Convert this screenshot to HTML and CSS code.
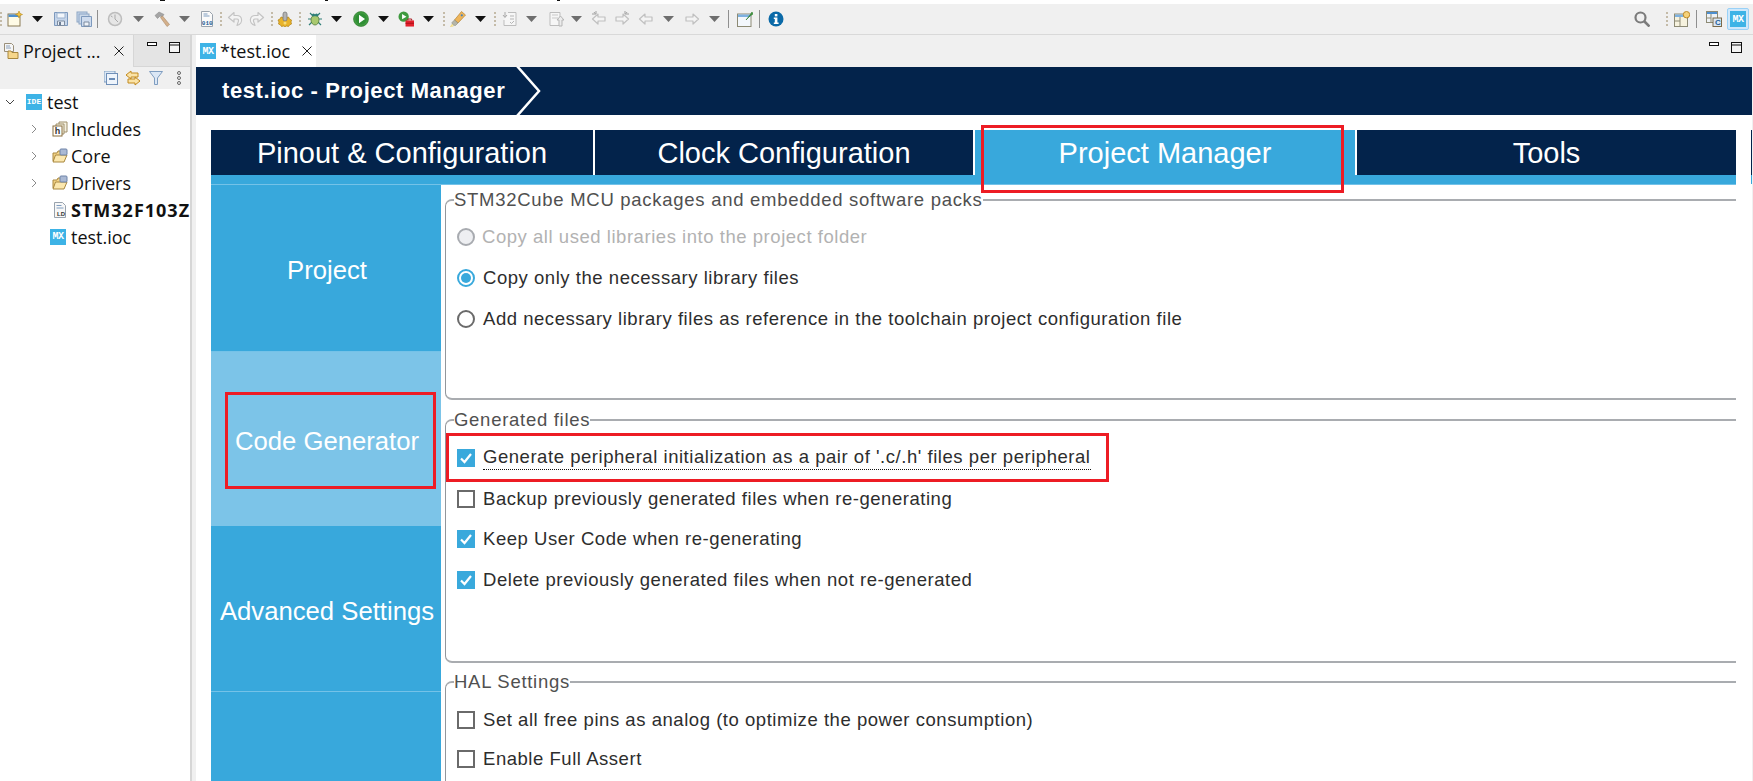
FILE: index.html
```html
<!DOCTYPE html>
<html lang="en">
<head>
<meta charset="utf-8">
<title>test.ioc - Project Manager</title>
<link rel="stylesheet" href="styles.css">
</head>
<body>
<svg class="defs" width="0" height="0" aria-hidden="true">
  <symbol id="close" viewBox="0 0 10 10"><path d="M.5.5l9 9M9.5.5l-9 9" stroke="#222" stroke-width="1" fill="none"/></symbol>
  <symbol id="min" viewBox="0 0 10 4"><rect x=".5" y=".5" width="9" height="3" fill="#fff" stroke="#111"/></symbol>
  <symbol id="max" viewBox="0 0 11 11"><rect x=".5" y=".5" width="10" height="10" fill="#f4f4f4" stroke="#111"/><path d="M0 3h11" stroke="#111"/></symbol>
  <symbol id="dots" viewBox="0 0 2 16"><path d="M0 1h2v2H0zM0 5h2v2H0zM0 9h2v2H0zM0 13h2v2H0z" fill="#c4bba8"/></symbol>
  <symbol id="floppy" viewBox="0 0 16 16"><path d="M1.5 1.5h13v13h-13z" fill="#c5d5ea" stroke="#7d99bd"/><path d="M4 2h8v5H4z" fill="#f2f6fb" stroke="#9db3cf"/><path d="M4.500 10h7v4.500h-7z" fill="#e8eef6" stroke="#7d8ca0"/><path d="M6 11h2v3H6z" fill="#6d7f96"/></symbol>
  <symbol id="fold" viewBox="0 0 16 16"><path d="M1 13V5h4l1-2h4l1 2h3v2" fill="#f4d488" stroke="#a8873e"/><path d="M1 14l2.500-7H15l-3 7z" fill="#fbe7ae" stroke="#a8873e"/><rect x="8" y="1" width="7" height="6" rx="1" fill="#aab9d4" stroke="#6f84a8"/></symbol>
  <symbol id="outl" viewBox="0 0 16 16"><path d="M7 3L1.500 8 7 13v-3h7V6H7z" fill="#f4f4f4" stroke="#c0c0c0" stroke-width="1.200" stroke-linejoin="round"/></symbol>
  <symbol id="outr" viewBox="0 0 16 16"><path d="M9 3l5.500 5L9 13v-3H2V6h7z" fill="#f4f4f4" stroke="#c0c0c0" stroke-width="1.200" stroke-linejoin="round"/></symbol>
  <symbol id="hook" viewBox="0 0 16 16"><path d="M7 1.500L1.500 6.500 7 11V8h3c1.500 0 2 1.500 1 3.500l-1 3c3.500-1 5-4 4.500-6.500C14 5.500 12 4.500 10 4.500H7z" fill="#f4f4f4" stroke="#c4c4c4" stroke-width="1.200" stroke-linejoin="round"/></symbol>
  <symbol id="tick" viewBox="0 0 18 18"><path d="M4 9.500l3.500 3.500L14 5" fill="none" stroke="#fff" stroke-width="2.200"/></symbol>
</svg>

<div class="top-strip"><i class="frag frag-a"></i><i class="frag frag-b"></i><i class="frag frag-c"></i></div>

<header class="toolbar">
  <div class="tb-left">
    <svg class="dots" viewBox="0 0 2 16"><use href="#dots"/></svg>
    <svg class="ico m5" viewBox="0 0 16 16"><rect x="1" y="3" width="12" height="12" fill="#fffbe6" stroke="#8a7a55"/><rect x="1.500" y="3.500" width="11" height="2.500" fill="#4d8fd0"/><path d="M12 0l1 2.500 2.500 1-2.500 1-1 2.500-1-2.500L8.500 3.500 11 2.500z" fill="#f4c542" stroke="#b98a1a" stroke-width=".6"/></svg>
    <i class="arrow m9"></i>
    <svg class="ico m10" viewBox="0 0 16 16"><use href="#floppy"/></svg>
    <svg class="ico m7" viewBox="0 0 16 16"><g opacity=".85"><rect x="1" y="1" width="10" height="10" fill="#c5d5ea" stroke="#7d99bd"/><rect x="3" y="3" width="10" height="10" fill="#c5d5ea" stroke="#7d99bd"/></g><path d="M5.500 5.500h10v10h-10z" fill="#cfdcee" stroke="#7d99bd"/><path d="M8 11h5v4H8z" fill="#eef2f8" stroke="#7d8ca0"/></svg>
    <i class="vsep m5"></i>
    <svg class="ico m9" viewBox="0 0 16 16"><circle cx="8" cy="8" r="6.500" fill="#e6e6e6" stroke="#bdbdbd" stroke-width="1.500"/><path d="M8 3.500V8l3 3M4 5l1.500 1" stroke="#a9a9a9" fill="none"/></svg>
    <i class="arrow dim m10"></i>
    <svg class="ico m10" viewBox="0 0 16 16"><path d="M1 4.500L5 1l5 2.500-2 2.500-2-1-2.500 2.500z" fill="#a5a5a5" stroke="#8d8d8d" stroke-width=".6"/><path d="M6.500 6.500L8.500 5l7 8.500-2.500 2z" fill="#d4b08a" stroke="#a98a6a" stroke-width=".6"/></svg>
    <i class="arrow dim m9"></i>
    <svg class="ico m9" viewBox="0 0 16 16"><path d="M2.500.5h8l3 3v12h-11z" fill="#fafafa" stroke="#9aa3ad"/><path d="M4.500 3h4M4.500 5h6" stroke="#7f9dc0"/><text class="bin" x="2.800" y="13.500">010</text></svg>
    <svg class="dots m5" viewBox="0 0 2 16"><use href="#dots"/></svg>
    <svg class="ico m5" viewBox="0 0 16 16"><use href="#hook"/></svg>
    <svg class="ico m6 flip" viewBox="0 0 16 16"><use href="#hook"/></svg>
    <svg class="dots m6" viewBox="0 0 2 16"><use href="#dots"/></svg>
    <svg class="ico m4" viewBox="0 0 16 16"><path d="M8 5l1.500 1.500 2-.5 1 2 2 1-.5 2 .5 2-2 1-1 1.500-2-.5-1.500 1-1.500-1-2 .5-1-1.500-2-1 .5-2L1 9l2-1 1-2 2 .5z" fill="#e8b32a" stroke="#b07f12" stroke-width=".7"/><rect x="6" y="1" width="4" height="9" rx="2" fill="#b3b3b3" stroke="#7a7a7a" stroke-width=".8"/><circle cx="8" cy="12" r="1.500" fill="#f7dc7a"/></svg>
    <svg class="dots m6" viewBox="0 0 2 16"><use href="#dots"/></svg>
    <svg class="ico m6" viewBox="0 0 16 16"><path d="M3 2l3 3M13 2l-3 3M1 8h3M15 8h-3M2 14l3-3M14 14l-3-3" stroke="#2f7f78" stroke-width="1.200"/><ellipse cx="8" cy="9" rx="4" ry="5" fill="#a9c96f" stroke="#4f7a3a" stroke-width=".8"/><circle cx="6.500" cy="4" r="1.600" fill="#2f7f78"/><circle cx="9.500" cy="4" r="1.600" fill="#2f7f78"/></svg>
    <i class="arrow m8"></i>
    <svg class="ico m11" viewBox="0 0 16 16"><circle cx="8" cy="8" r="7.500" fill="#3f9a3f" stroke="#2b7a2b" stroke-width=".6"/><circle cx="8" cy="8" r="5.500" fill="#2f8f35"/><path d="M6 3.800L12 8l-6 4.200z" fill="#fff"/></svg>
    <i class="arrow m9"></i>
    <svg class="ico m9" viewBox="0 0 17 17"><circle cx="6" cy="6" r="5.500" fill="#3f9a3f"/><path d="M4.300 3.200L9 6l-4.700 2.800z" fill="#fff"/><rect x="8" y="10" width="9" height="6.500" fill="#e2202c"/><path d="M10.500 10V8.500h4V10M8 13h9" stroke="#a51018" fill="none"/></svg>
    <i class="arrow m9"></i>
    <svg class="dots m9" viewBox="0 0 2 16"><use href="#dots"/></svg>
    <svg class="ico m5" viewBox="0 0 16 16"><path d="M11.500.5l4 3.500-7.500 8L4.500 9z" fill="#eeb55a" stroke="#b58433" stroke-width=".7"/><path d="M4.500 9L8 12l-2.500 2.500-3-.5-.5-2.500z" fill="#b5b5a8" stroke="#8a8a7a" stroke-width=".6"/><path d="M2.500 13l-2 2.500 3-.5" fill="#fff3b0" stroke="#e8cb60" stroke-width=".6"/><circle cx="11.800" cy="4.300" r="1.100" fill="#3d83c7"/></svg>
    <i class="arrow m9"></i>
    <svg class="dots m8" viewBox="0 0 2 16"><use href="#dots"/></svg>
    <svg class="ico m6" viewBox="0 0 16 16"><path d="M6 1.500h8v13H2V9" fill="#f6f6f6" stroke="#bdbdbd"/><path d="M3 1v5M1 4l2 2.500L5 4" stroke="#a8a8a8" fill="none"/><path d="M8 5h4M8 8h4M8 11l1.500 1.500L12 10" stroke="#b5b5b5" fill="none"/></svg>
    <i class="arrow dim m8"></i>
    <svg class="ico m11" viewBox="0 0 16 16"><path d="M2 1.500h10v13H2z" fill="#f6f6f6" stroke="#bdbdbd"/><path d="M4 4h6M4 7h6" stroke="#c9c9c9"/><path d="M11 15V9H9l3.500-4L16 9h-2v6z" fill="#ececec" stroke="#b5b5b5"/></svg>
    <i class="arrow dim m7"></i>
    <svg class="ico m9" viewBox="0 0 16 16"><use href="#outl"/><path d="M3 1l1 1.500M5 0v3M1 3h4" stroke="#9f9f9f"/></svg>
    <svg class="ico m7" viewBox="0 0 16 16"><use href="#outr"/><path d="M13 1l-1 1.500M11 0v3M15 3h-4" stroke="#9f9f9f"/></svg>
    <svg class="ico m8" viewBox="0 0 16 16"><use href="#outl"/></svg>
    <i class="arrow dim m9"></i>
    <svg class="ico m10" viewBox="0 0 16 16"><use href="#outr"/></svg>
    <i class="arrow dim m9"></i>
    <i class="vsep m8"></i>
    <svg class="ico m8" viewBox="0 0 16 16"><rect x=".5" y="3" width="13.500" height="12.500" fill="#f3f7fc" stroke="#8d8a74"/><rect x="1" y="3.500" width="12.500" height="2.500" fill="#7eb1e0"/><path d="M9 9l4-5 2-3 1 2-3 2z" fill="#3f9a3f" stroke="#2b7a2b" stroke-width=".6"/></svg>
    <i class="vsep m6"></i>
    <svg class="ico m8" viewBox="0 0 16 16"><circle cx="8" cy="8" r="7.500" fill="#0b6aa8"/><rect x="6.800" y="3" width="2.600" height="2.400" fill="#fff"/><path d="M5.800 6.500h3.600v5h1.200v1.500H5.800v-1.500h1v-3.500h-1z" fill="#fff"/></svg>
  </div>
  <div class="tb-right">
    <svg class="ico" viewBox="0 0 16 16"><circle cx="6.500" cy="6.500" r="5" fill="none" stroke="#7b7b7b" stroke-width="2.200"/><path d="M10 10l5.500 5.500" stroke="#7b7b7b" stroke-width="2.600"/></svg>
    <svg class="dots m16" viewBox="0 0 2 16"><use href="#dots"/></svg>
    <svg class="ico m6" viewBox="0 0 16 16"><rect x=".5" y="3" width="13" height="12.500" fill="#f6f2de" stroke="#8d8a74"/><rect x="1" y="3.500" width="12" height="2.500" fill="#7eb1e0"/><path d="M6 6v9M1 10h5" stroke="#8d8a74"/><path d="M12.500 .5a3.200 3.200 0 110 6.400 3.200 3.200 0 010-6.400z" fill="#f6d27a" stroke="#bd8a2a"/></svg>
    <i class="vsep m6"></i>
    <svg class="ico m9" viewBox="0 0 16 16"><rect x=".5" y=".5" width="11" height="11" fill="#eef2f6" stroke="#8d8a74"/><rect x="1" y="1" width="10" height="2" fill="#4d8fd0"/><path d="M5 3v8M1 7h4" stroke="#8d8a74"/><rect x="7" y="7" width="8.500" height="8.500" fill="#d8e6f4" stroke="#7a6a4a"/><text class="cletter" x="9" y="14">C</text></svg>
    <span class="mx-active m5"><span class="badge badge-mx">MX</span></span>
  </div>
</header>

<main class="workspace">
  <aside class="explorer">
    <div class="view-tabs">
      <div class="view-tab">
        <svg class="ico" viewBox="0 0 16 16"><path d="M1.500.5h7l2 2v6h-9z" fill="#f6f6f6" stroke="#9a8f7a"/><path d="M3 3h4M3 5h5" stroke="#8aa0bb"/><path d="M5 15.500V8h3l1 1.500h6v6z" fill="#f6d68a" stroke="#a8873e"/></svg>
        <span class="view-title">Project ...</span>
        <svg class="x" viewBox="0 0 10 10"><use href="#close"/></svg>
      </div>
      <div class="view-ctl">
        <svg class="min" viewBox="0 0 10 4"><use href="#min"/></svg>
        <svg class="max" viewBox="0 0 11 11"><use href="#max"/></svg>
      </div>
    </div>
    <div class="view-bar">
      <svg class="ico-s" viewBox="0 0 14 14"><rect x="0" y="0" width="11" height="11" fill="#dce8f5" stroke="#7f9dc0"/><rect x="2.500" y="2.500" width="11" height="11" fill="#eef4fb" stroke="#6f8fb8"/><path d="M5 8h6" stroke="#3e6aa0" stroke-width="1.500"/></svg>
      <svg class="ico m7" viewBox="0 0 16 16"><path d="M6 1L1 5l5 4V7h7V3H6zM10 7l5 4-5 4v-2H3V9h7z" fill="#fbe3a6" stroke="#c28a1f" stroke-linejoin="round"/></svg>
      <svg class="ico-s m8" viewBox="0 0 14 14"><path d="M.5.500h13L8.500 7v6.500h-3V7z" fill="#dbe7f5" stroke="#7f9dc0"/></svg>
      <svg class="kebab m14" viewBox="0 0 4 14"><circle cx="2" cy="2" r="1.500" fill="none" stroke="#666"/><circle cx="2" cy="7" r="1.500" fill="none" stroke="#666"/><circle cx="2" cy="12" r="1.500" fill="none" stroke="#666"/></svg>
    </div>
    <ul class="tree">
      <li class="tree-row"><svg class="tw root" viewBox="0 0 10 6"><path d="M1 1l4 4 4-4" fill="none" stroke="#444"/></svg><span class="badge badge-ide">IDE</span><span class="tree-text">test</span></li>
      <li class="tree-row child"><svg class="tw" viewBox="0 0 6 10"><path d="M1 1l4 4-4 4" fill="none" stroke="#8a8a8a"/></svg><svg class="ico" viewBox="0 0 16 16"><path d="M7 1h8v10H7z" fill="#f5f0e0" stroke="#9f8f6a"/><path d="M4 3h8v10H4z" fill="#f5f0e0" stroke="#9f8f6a"/><rect x="1" y="5" width="9" height="10" fill="#fff" stroke="#8a6f3e"/><text class="hletter" x="2.800" y="13">h</text></svg><span class="tree-text">Includes</span></li>
      <li class="tree-row child"><svg class="tw" viewBox="0 0 6 10"><path d="M1 1l4 4-4 4" fill="none" stroke="#8a8a8a"/></svg><svg class="ico" viewBox="0 0 16 16"><use href="#fold"/></svg><span class="tree-text">Core</span></li>
      <li class="tree-row child"><svg class="tw" viewBox="0 0 6 10"><path d="M1 1l4 4-4 4" fill="none" stroke="#8a8a8a"/></svg><svg class="ico" viewBox="0 0 16 16"><use href="#fold"/></svg><span class="tree-text">Drivers</span></li>
      <li class="tree-row leaf"><svg class="ico" viewBox="0 0 16 16"><path d="M2.500.5h8l3 3v12h-11z" fill="#f7f7f7" stroke="#98a2ad"/><path d="M4.500 3.500h5M4.500 6h7" stroke="#7f9dc0"/><text class="ldletter" x="5" y="14">LD</text></svg><span class="tree-text strong">STM32F103Z</span></li>
      <li class="tree-row leaf-mx"><span class="badge badge-mx">MX</span><span class="tree-text">test.ioc</span></li>
    </ul>
  </aside>

  <section class="editor">
    <div class="editor-tabs">
      <div class="editor-tab"><span class="badge badge-mx">MX</span><span class="editor-title">*test.ioc</span><svg class="x" viewBox="0 0 10 10"><use href="#close"/></svg></div>
      <div class="editor-ctl">
        <svg class="min" viewBox="0 0 10 4"><use href="#min"/></svg>
        <svg class="max" viewBox="0 0 11 11"><use href="#max"/></svg>
      </div>
    </div>
    <div class="crumb">
      <span class="crumb-text">test.ioc - Project Manager</span>
      <svg class="chevron" viewBox="0 0 26 48"><path d="M1-1l22 25L1 49" fill="none" stroke="#fff" stroke-width="2.500"/></svg>
    </div>
    <div class="body">
      <nav class="main-tabs">
        <div class="main-tab">Pinout &amp; Configuration</div>
        <div class="main-tab">Clock Configuration</div>
        <div class="main-tab active">Project Manager<i class="mark mark-tab"></i></div>
        <div class="main-tab">Tools</div>
      </nav>
      <div class="strip"></div>
      <div class="split">
        <div class="side">
          <div class="side-item">Project</div>
          <div class="side-item active">Code Generator<i class="mark mark-side"></i></div>
          <div class="side-item">Advanced Settings</div>
          <div class="side-item"></div>
        </div>
        <div class="panels">
          <fieldset class="group group-pack">
            <legend>STM32Cube MCU packages and embedded software packs</legend>
            <div class="opt disabled"><i class="radio"></i><span>Copy all used libraries into the project folder</span></div>
            <div class="opt"><i class="radio on"></i><span>Copy only the necessary library files</span></div>
            <div class="opt"><i class="radio"></i><span>Add necessary library files as reference in the toolchain project configuration file</span></div>
          </fieldset>
          <fieldset class="group group-gen">
            <legend>Generated files</legend>
            <div class="opt marked"><i class="check on"><svg viewBox="0 0 18 18"><use href="#tick"/></svg></i><span class="dotted">Generate peripheral initialization as a pair of '.c/.h' files per peripheral</span><i class="mark mark-opt"></i></div>
            <div class="opt"><i class="check"></i><span>Backup previously generated files when re-generating</span></div>
            <div class="opt"><i class="check on"><svg viewBox="0 0 18 18"><use href="#tick"/></svg></i><span>Keep User Code when re-generating</span></div>
            <div class="opt"><i class="check on"><svg viewBox="0 0 18 18"><use href="#tick"/></svg></i><span>Delete previously generated files when not re-generated</span></div>
          </fieldset>
          <fieldset class="group group-hal">
            <legend>HAL Settings</legend>
            <div class="opt"><i class="check"></i><span>Set all free pins as analog (to optimize the power consumption)</span></div>
            <div class="opt"><i class="check"></i><span>Enable Full Assert</span></div>
          </fieldset>
        </div>
      </div>
      <i class="sliver"></i>
    </div>
  </section>
</main>
</body>
</html>
```

FILE: styles.css
```css
* { box-sizing: border-box; }
html, body { margin: 0; height: 100%; overflow: hidden; }
body {
  display: flex;
  flex-direction: column;
  background: #f0f0f0;
  font-family: "Liberation Sans", Arial, sans-serif;
  color: #2d2d2d;
}
.defs { position: absolute; }
i { display: block; font-style: normal; }
ul { list-style: none; margin: 0; padding: 0; }

.top-strip { height: 4px; background: #fff; display: flex; align-items: flex-start; flex: none; }
.frag { height: 1px; background: #111; }
.frag-a { width: 5px; margin-left: 160px; }
.frag-b { width: 3px; margin-left: 160px; }
.frag-c { width: 3px; margin-left: 229px; }

.toolbar {
  height: 31px;
  flex: none;
  display: flex;
  justify-content: space-between;
  align-items: center;
  border-bottom: 1px solid #d9d9d9;
  padding-right: 4px;
  background: #f0f0f0;
}
.tb-left, .tb-right { display: flex; align-items: center; }
.ico { width: 16px; height: 16px; flex: none; display: block; }
.ico.flip { transform: scaleX(-1); }
.ico-s { width: 14px; height: 14px; flex: none; display: block; }
.dots { width: 2px; height: 16px; flex: none; display: block; }
.arrow { width: 11px; height: 6px; flex: none; background: #111; clip-path: polygon(0 0, 100% 0, 50% 100%); }
.arrow.dim { background: #6e6e6e; }
.vsep { width: 1px; height: 18px; background: #8f8f8f; flex: none; }
.kebab { width: 4px; height: 14px; flex: none; }
.bin { font: 700 6px "Liberation Mono", monospace; fill: #1f5e96; }
.cletter { font: 700 8px "Liberation Sans", sans-serif; fill: #1f5e96; }
.hletter { font: 700 9px "Liberation Sans", sans-serif; fill: #333; }
.ldletter { font: 700 6px "Liberation Sans", sans-serif; fill: #333; }

.m4 { margin-left: 4px; } .m5 { margin-left: 5px; } .m6 { margin-left: 6px; }
.m7 { margin-left: 7px; } .m8 { margin-left: 8px; } .m9 { margin-left: 9px; }
.m10 { margin-left: 10px; } .m11 { margin-left: 11px; } .m14 { margin-left: 14px; }
.m16 { margin-left: 16px; }

.badge {
  width: 16px; height: 16px; flex: none;
  display: flex; align-items: center; justify-content: center;
  background: #3db3e6; color: #fff;
  font: 700 10px "Liberation Mono", monospace;
  letter-spacing: -.5px;
}
.badge-ide { font-size: 8px; letter-spacing: 0; }
.mx-active {
  width: 22px; height: 22px; display: flex; align-items: center; justify-content: center;
  background: #cfe8fb; border: 1px solid #99d1f7; border-radius: 2px;
}

.workspace { flex: 1; min-height: 0; display: flex; }

.explorer {
  width: 192px; flex: none; display: flex; flex-direction: column;
  border-right: 2px solid #d6d6d6;
  margin-right: 4px;
  background: #fff;
  font-family: "Open Sans", "Noto Sans", sans-serif;
  color: #111;
}
.view-tabs { height: 32px; flex: none; display: flex; background: #f0f0f0; }
.view-tab { width: 133px; display: flex; align-items: center; padding-left: 3px; }
.view-title { font-size: 18px; margin-left: 4px; width: 91px; white-space: nowrap; }
.x { width: 10px; height: 10px; flex: none; display: block; }
.view-ctl { flex: 1; background: #e4e4e4; border-left: 1px solid #d6d6d6; border-bottom: 1px solid #d6d6d6; padding: 7px 10px 0 13px; display: flex; justify-content: space-between; align-items: flex-start; }
.min { width: 10px; height: 4px; display: block; }
.max { width: 11px; height: 11px; display: block; }
.view-bar { height: 22px; flex: none; display: flex; align-items: center; padding-left: 104px; background: #f0f0f0; }

.tree { flex: 1; overflow: hidden; }
.tree-row { height: 27px; padding-bottom: 2px; display: flex; align-items: center; white-space: nowrap; font-size: 18px; }
.tw { flex: none; display: block; }
.tw.root { width: 10px; height: 6px; margin: 0 11px 0 5px; }
.tree-row.child { padding-left: 31px; }
.tree-row.child .tw { width: 6px; height: 10px; margin-right: 15px; }
.tree-row.leaf { padding-left: 52px; }
.tree-row.leaf-mx { padding-left: 50px; }
.tree-text { margin-left: 3px; }
.tree-row:first-child .tree-text { margin-left: 5px; }
.leaf-mx .tree-text { margin-left: 5px; }
.strong { font-weight: 700; letter-spacing: 1px; }

.editor { flex: 1; min-width: 0; display: flex; flex-direction: column; margin-right: 1px; }
.editor-tabs { height: 32px; flex: none; display: flex; justify-content: space-between; background: #f0f0f0; }
.editor-tab { width: 120px; background: #fff; display: flex; align-items: center; padding-left: 4px; font-family: "Open Sans", "Noto Sans", sans-serif; color: #111; }
.editor-title { font-size: 18px; margin: 0 9px 0 4px; width: 73px; white-space: nowrap; }
.editor-ctl { width: 33px; margin-right: 10px; padding-top: 7px; display: flex; justify-content: space-between; align-items: flex-start; }

.crumb { height: 48px; flex: none; background: #03234b; display: flex; align-items: center; padding-left: 26px; overflow: hidden; }
.crumb-text { color: #fff; font-size: 22px; font-weight: 700; letter-spacing: .6px; white-space: nowrap; }
.chevron { width: 26px; height: 48px; margin-left: 11px; flex: none; }

.body { flex: 1; min-height: 0; background: #fff; padding: 15px 15px 0 15px; position: relative; overflow: hidden; display: flex; flex-direction: column; }
.main-tabs { display: grid; grid-template-columns: 382px 378px 380px 379px; column-gap: 2px; background: #fff; flex: none; }
.main-tab { height: 45px; padding-top: 2px; background: #03234b; color: #fff; font-size: 29px; display: flex; align-items: center; justify-content: center; position: relative; }
.main-tab.active { background: #38a8dc; }
.strip { height: 10px; flex: none; width: 1525px; background: #38a8dc; border-bottom: 1px solid #74c2e8; }

.split { flex: 1; min-height: 0; display: flex; }
.side { width: 230px; flex: none; display: flex; flex-direction: column; background: #38a8dc; }
.side-item { height: 167px; flex: none; padding: 4px 0 0 2px; display: flex; align-items: center; justify-content: center; color: #fff; font-size: 25.700px; position: relative; border-bottom: 1px solid #74c2e8; }
.side-item:nth-child(2) { height: 174px; }
.side-item:nth-child(3) { height: 166px; padding-top: 6px; }
.side-item.active { background: #7cc4e8; border-bottom: 0; }
.side-item:last-child { border-bottom: 0; flex: 1; }

.panels { flex: none; width: 1295px; padding: 5px 0 0 4px; overflow: hidden; }
.group { width: 1320px; margin: 0 0 10px; padding: 6px 0 0 11px; border: 2px solid #a9acb0; border-left: 1px solid #92969b; border-radius: 7px; min-width: 0; }
.group legend { margin-left: -3px; padding: 0; font-size: 18.500px; line-height: 20px; letter-spacing: .72px; color: #505050; white-space: nowrap; }
.group-pack { height: 210px; }
.group-gen { height: 253px; margin-bottom: 9px; padding-top: 8px; }
.group-hal { height: 200px; padding-top: 8px; }
.opt { height: 41px; display: flex; align-items: center; font-size: 18.500px; letter-spacing: .54px; position: relative; white-space: nowrap; }
.group-gen .opt { height: 40.500px; }
.group-hal .opt { height: 39px; }
.opt > span { margin-left: 8px; }
.opt.disabled { color: #b2b2b2; }
.opt.disabled > span { margin-left: 7px; }
.radio { width: 18px; height: 18px; flex: none; border-radius: 50%; border: 2px solid #6a6a6a; background: #fff; position: relative; }
.opt.disabled .radio { border-color: #a8abb0; background: #eeeff2; }
.radio.on { border-color: #39a9dc; }
.radio.on::after { content: ""; position: absolute; inset: 2px; border-radius: 50%; background: #39a9dc; }
.check { width: 18px; height: 18px; flex: none; border: 2px solid #6a6a6a; background: #fff; }
.check.on { border: 0; background: #39a9dc; }
.check svg { display: block; width: 18px; height: 18px; }
.dotted { border-bottom: 1px dotted #111; padding-bottom: 1px; }

.mark { position: absolute; border: 3px solid #ed1c24; pointer-events: none; }
.mark-tab { left: 6px; right: 11px; top: -5px; bottom: -18px; }
.mark-side { left: 14px; right: 5px; top: 40px; bottom: 37px; }
.mark-opt { left: -11px; width: 663px; top: -5px; bottom: -3px; }

.sliver { position: absolute; right: 0; top: 15px; width: 1px; height: 54px; background: linear-gradient(#03234b 45px, #38a8dc 45px); }
```
